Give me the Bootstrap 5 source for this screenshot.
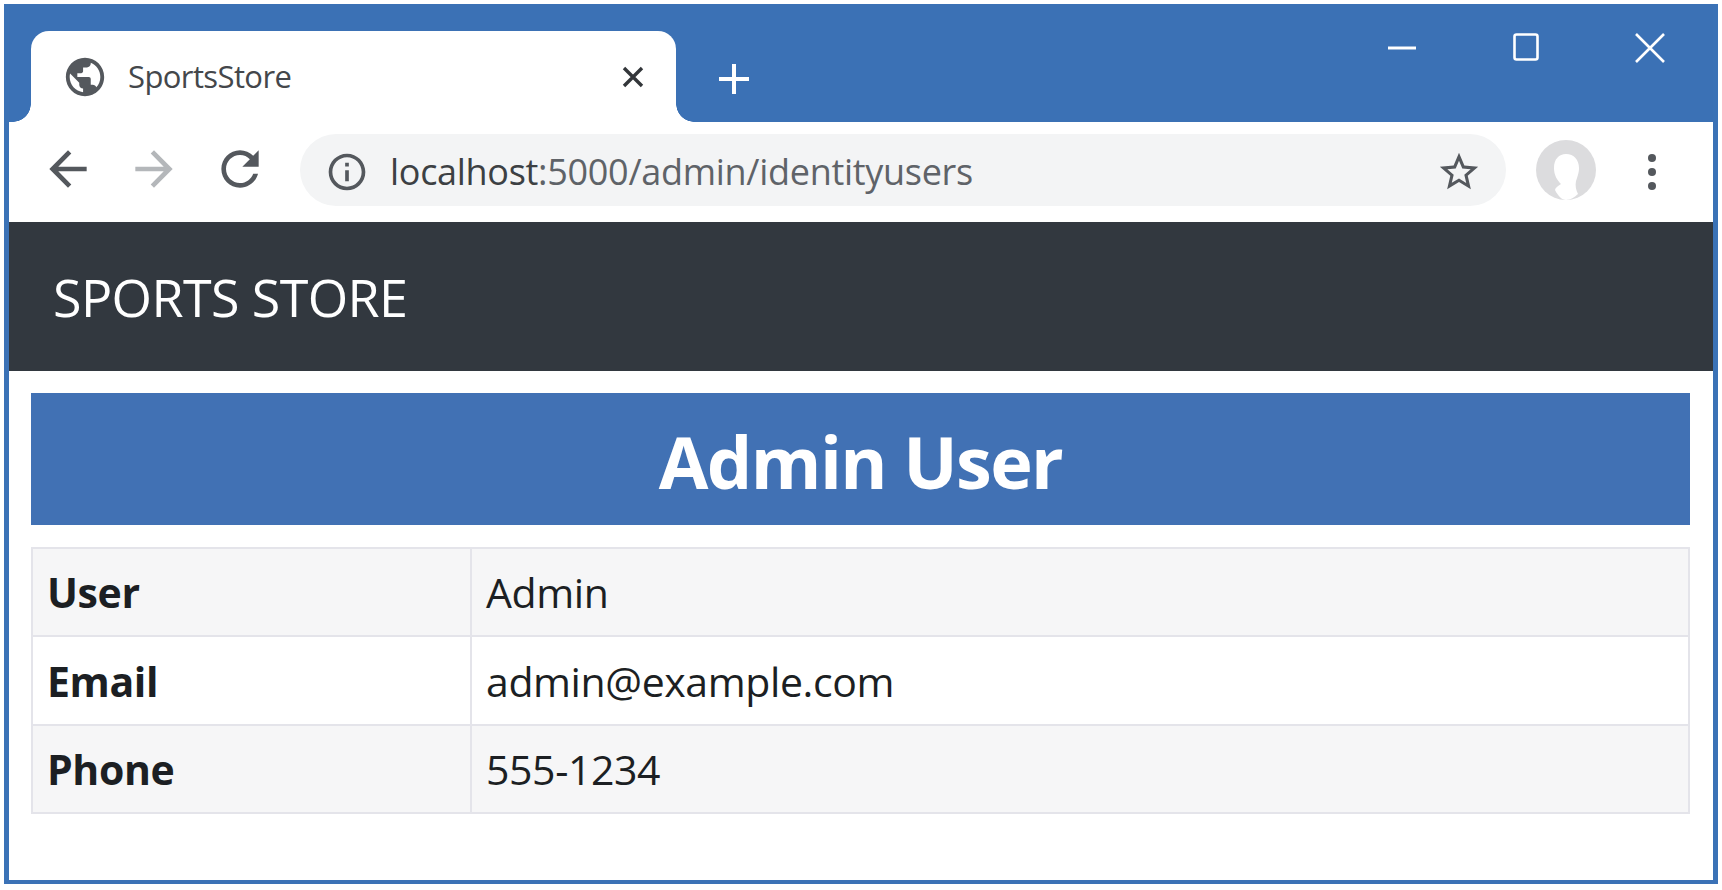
<!DOCTYPE html>
<html lang="en">
<head>
  <meta charset="UTF-8" />
  <title>SportsStore</title>
  <link href="https://cdn.jsdelivr.net/npm/bootstrap@5.3.3/dist/css/bootstrap.min.css" rel="stylesheet" />
  <style>
    html, body { height: 100%; background: #fff; }
    body { font-family: "Open Sans", "Liberation Sans", sans-serif; overflow: hidden; }

    .win-frame { margin: 4px; height: 880px; border: solid #3b72b6; border-width: 0 5px 4px 5px; background: #fff; }

    /* title strip */
    .tab-strip { height: 118px; background: #3b71b5; padding: 27px 0 0 22px; }
    .tab-live { position: relative; width: 645px; height: 91px; background: #fff; border-radius: 18px 18px 0 0; padding: 0 32px 0 31px; }
    .tab-live::before, .tab-live::after { content: ""; position: absolute; bottom: 0; width: 18px; height: 18px; }
    .tab-live::before { left: -18px; background: radial-gradient(circle at 0 0, #3b71b5 17.5px, #fff 18px); }
    .tab-live::after { right: -18px; background: radial-gradient(circle at 100% 0, #3b71b5 17.5px, #fff 18px); }
    .tab-name { font-size: 31px; color: #44474b; letter-spacing: -.6px; margin-left: 20px; }
    .tab-plus { margin: 31px 0 0 41px; }
    .win-btns { margin-left: auto; padding: 29px 48px 0 0; gap: 96px; height: 64px; margin-top: -27px; }

    /* toolbar */
    .tool-row { height: 100px; padding: 12px 0 0 31px; gap: 30px; }
    .tool-ico { margin-top: 7px; }
    .addr-pill { width: 1206px; height: 72px; margin-left: 2px; border-radius: 36px; background: #f3f4f5; padding: 4px 24px 0 25px; }
    .addr-text { font-size: 36px; color: #5f6368; letter-spacing: -.3px; margin-left: 21px; }
    .addr-text b { font-weight: 400; color: #3c4043; }
    .avatar-pic { margin-top: 6px; }
    .dots-pic { margin: 20px 0 0 21px; }

    /* page */
    .store-bar { height: 149px; background: #32383f; padding: 0 0 0 44px; }
    .store-name { font-size: 52px; color: #fff; letter-spacing: -.6px; }
    .page-area { padding: 22px 23px 0 22px; }
    .title-band { height: 132px; margin-bottom: 22px; padding-top: 4px; background: #4171b4; color: #fff; font-size: 72px; font-weight: 700; letter-spacing: -1.6px; }
    .user-tbl { width: 100%; height: 267px; table-layout: fixed; font-size: 41px; color: #1c1f23; margin: 0; --bs-table-striped-bg: #f6f6f7; --bs-table-striped-color: #1c1f23; --bs-border-color: #e4e4ea; }
    .user-tbl td, .user-tbl th { border: 2px solid #e4e4ea; padding: 2px 14px 0; vertical-align: middle; letter-spacing: -.4px; }
    .user-tbl th { width: 439px; font-weight: 700; }
  </style>
</head>
<body>
  <div class="win-frame d-flex flex-column">

    <!-- tabs -->
    <div class="tab-strip d-flex align-items-start">
      <div class="tab-live d-flex align-items-center">
        <svg width="46" height="46" viewBox="0 0 24 24" fill="#54585d"><path d="M12 2C6.48 2 2 6.48 2 12s4.48 10 10 10 10-4.48 10-10S17.52 2 12 2zm-1 17.93c-3.95-.49-7-3.85-7-7.93 0-.62.08-1.21.21-1.79L9 15v1c0 1.1.9 2 2 2v1.93zm6.9-2.54c-.26-.81-1-1.39-1.9-1.39h-1v-3c0-.55-.45-1-1-1H8v-2h2c.55 0 1-.45 1-1V7h2c1.1 0 2-.9 2-2v-.41c2.93 1.19 5 4.06 5 7.41 0 2.08-.8 3.97-2.1 5.39z"/></svg>
        <span class="tab-name">SportsStore</span>
        <svg class="ms-auto" width="22" height="22" viewBox="0 0 22 22" stroke="#33363a" stroke-width="3.4"><path d="M2 2l18 18M20 2L2 20"/></svg>
      </div>
      <svg class="tab-plus" width="34" height="34" viewBox="0 0 34 34" stroke="#fff" stroke-width="4"><path d="M17 2v30M2 17h30"/></svg>
      <div class="win-btns d-flex align-items-start">
        <svg width="30" height="30" viewBox="0 0 30 30" stroke="#fff" stroke-width="3"><path d="M1 15h28"/></svg>
        <svg width="26" height="28" viewBox="0 0 26 28" fill="none" stroke="#fff" stroke-width="2.6"><rect x="1.5" y="1.5" width="23" height="25" rx="2"/></svg>
        <svg width="30" height="30" viewBox="0 0 30 30" stroke="#fff" stroke-width="2.6"><path d="M1 1l28 28M29 1L1 29"/></svg>
      </div>
    </div>

    <!-- toolbar -->
    <div class="tool-row d-flex align-items-start">
      <svg class="tool-ico" width="56" height="56" viewBox="0 0 24 24" fill="#54585d"><path d="M20 11H7.83l5.59-5.59L12 4l-8 8 8 8 1.41-1.41L7.83 13H20v-2z"/></svg>
      <svg class="tool-ico" width="56" height="56" viewBox="0 0 24 24" fill="#b4b7ba"><path d="M12 4l-1.41 1.41L16.17 11H4v2h12.17l-5.58 5.59L12 20l8-8z"/></svg>
      <svg class="tool-ico" width="56" height="56" viewBox="0 0 24 24" fill="#54585d"><path d="M17.65 6.35C16.2 4.9 14.21 4 12 4c-4.42 0-7.99 3.58-7.99 8s3.57 8 7.99 8c3.73 0 6.84-2.55 7.73-6h-2.08c-.82 2.33-3.04 4-5.65 4-3.31 0-6-2.69-6-6s2.69-6 6-6c1.66 0 3.14.69 4.22 1.78L13 11h7V4l-2.35 2.35z"/></svg>
      <div class="addr-pill d-flex align-items-center">
        <svg width="44" height="44" viewBox="0 0 24 24" fill="#54585d"><path d="M11 7h2v2h-2zm0 4h2v6h-2zm1-9C6.48 2 2 6.48 2 12s4.48 10 10 10 10-4.48 10-10S17.52 2 12 2zm0 18c-4.41 0-8-3.59-8-8s3.59-8 8-8 8 3.59 8 8-3.59 8-8 8z"/></svg>
        <span class="addr-text"><b>localhost</b>:5000/admin/identityusers</span>
        <svg class="ms-auto" width="46" height="46" viewBox="0 0 24 24" fill="#54585d"><path d="M22 9.24l-7.19-.62L12 2 9.19 8.63 2 9.24l5.46 4.73L5.82 21 12 17.27 18.18 21l-1.63-7.03L22 9.24zM12 15.4l-3.76 2.27 1-4.28-3.32-2.88 4.38-.38L12 6.1l1.71 4.04 4.38.38-3.32 2.88 1 4.28L12 15.4z"/></svg>
      </div>
      <svg class="avatar-pic" width="60" height="60" viewBox="0 0 60 60"><circle cx="30" cy="30" r="30" fill="#dcdcde"/><path d="M30 14c-7 0-12 5-12 14 0 7 3 12 7 16-3 2-6 4-6 6 3 6 7 10 11 10s9-3 12-6c-2-4-3-8-2-13 2-6 3-9 3-13 0-8-5-14-13-14z" fill="#fff"/></svg>
      <svg class="dots-pic" width="10" height="36" viewBox="0 0 10 36" fill="#54585d"><circle cx="5" cy="4" r="4"/><circle cx="5" cy="18" r="4"/><circle cx="5" cy="32" r="4"/></svg>
    </div>

    <!-- page -->
    <nav class="navbar store-bar">
      <span class="store-name">SPORTS STORE</span>
    </nav>
    <div class="page-area">
      <h1 class="title-band d-flex align-items-center justify-content-center">Admin User</h1>
      <table class="table table-striped table-bordered user-tbl">
        <tbody>
          <tr><th>User</th><td>Admin</td></tr>
          <tr><th>Email</th><td>admin@example.com</td></tr>
          <tr><th>Phone</th><td>555-1234</td></tr>
        </tbody>
      </table>
    </div>
  </div>
  <script src="https://cdn.jsdelivr.net/npm/bootstrap@5.3.3/dist/js/bootstrap.bundle.min.js"></script>
</body>
</html>
